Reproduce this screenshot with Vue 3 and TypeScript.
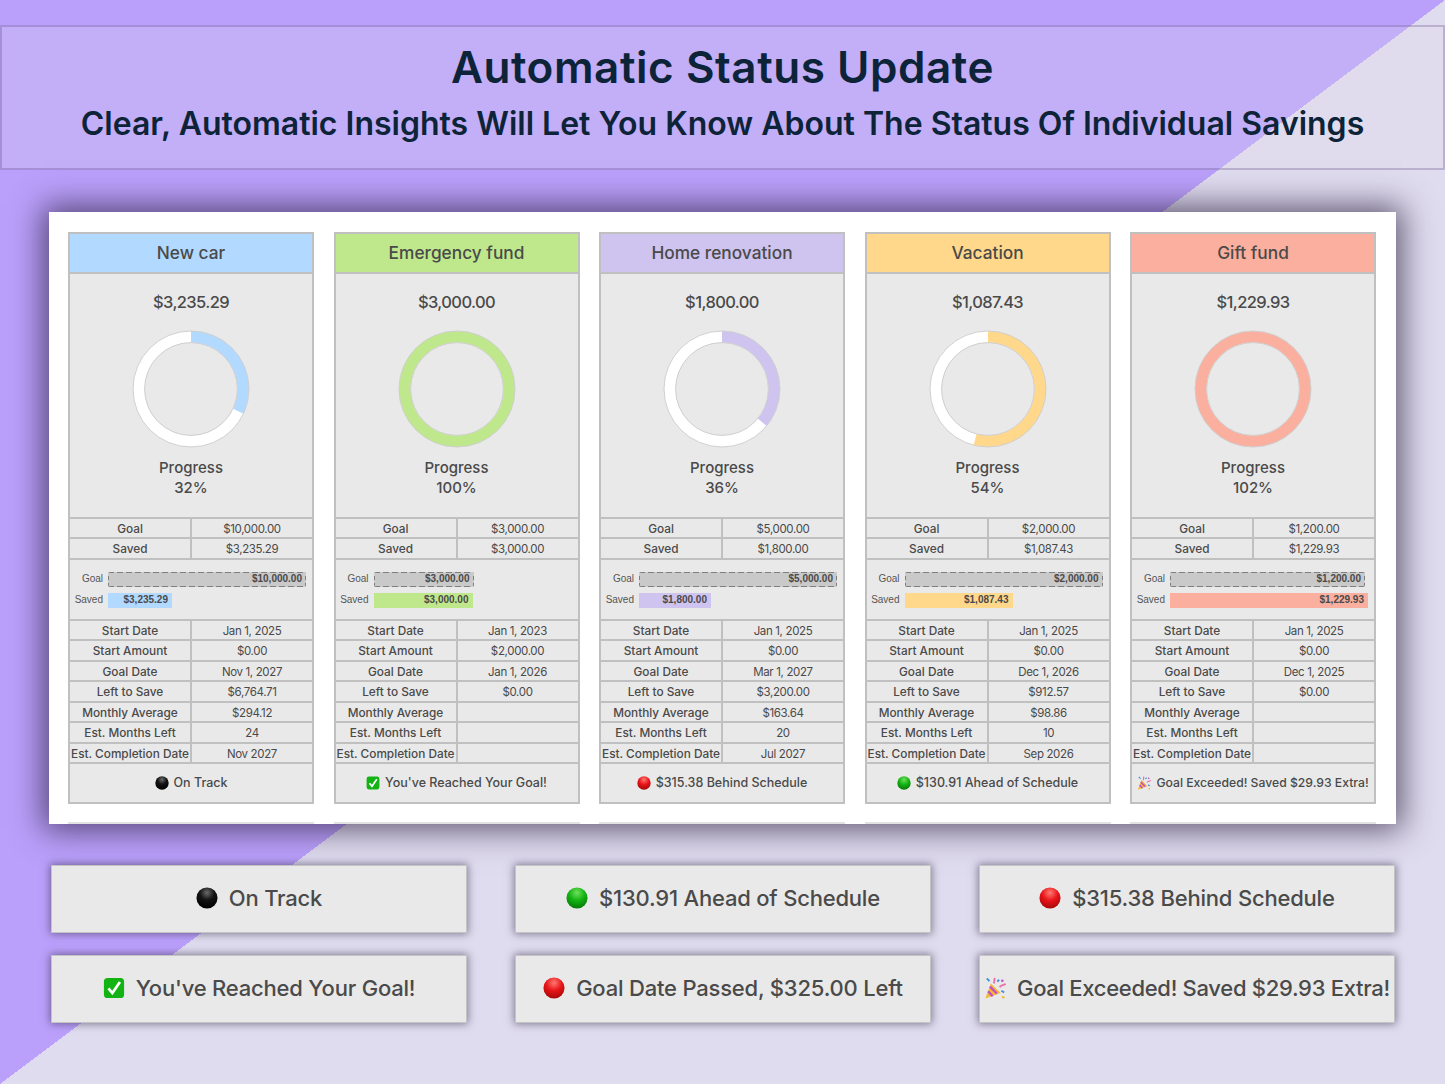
<script setup lang="ts">
type Status = 'black' | 'green' | 'red' | 'check' | 'party'
interface Row { label: string; value: string }
interface Goal {
  name: string; color: string; amount: string; pct: number; goal: string; saved: string
  goalW: number; savedW: number; rows: string[]; status: Status; statusText: string
}
const labels = ['Start Date', 'Start Amount', 'Goal Date', 'Left to Save', 'Monthly Average', 'Est. Months Left', 'Est. Completion Date']
const goals: Goal[] = [
  { name: 'New car', color: '#b2d9ff', amount: '$3,235.29', pct: 32, goal: '$10,000.00', saved: '$3,235.29', goalW: 198, savedW: 64,
    rows: ['Jan 1, 2025', '$0.00', 'Nov 1, 2027', '$6,764.71', '$294.12', '24', 'Nov 2027'], status: 'black', statusText: 'On Track' },
  { name: 'Emergency fund', color: '#bfe88c', amount: '$3,000.00', pct: 100, goal: '$3,000.00', saved: '$3,000.00', goalW: 100, savedW: 99,
    rows: ['Jan 1, 2023', '$2,000.00', 'Jan 1, 2026', '$0.00', '', '', ''], status: 'check', statusText: "You've Reached Your Goal!" },
  { name: 'Home renovation', color: '#cfc3ef', amount: '$1,800.00', pct: 36, goal: '$5,000.00', saved: '$1,800.00', goalW: 198, savedW: 72,
    rows: ['Jan 1, 2025', '$0.00', 'Mar 1, 2027', '$3,200.00', '$163.64', '20', 'Jul 2027'], status: 'red', statusText: '$315.38 Behind Schedule' },
  { name: 'Vacation', color: '#ffd88c', amount: '$1,087.43', pct: 54, goal: '$2,000.00', saved: '$1,087.43', goalW: 198, savedW: 108,
    rows: ['Jan 1, 2025', '$0.00', 'Dec 1, 2026', '$912.57', '$98.86', '10', 'Sep 2026'], status: 'green', statusText: '$130.91 Ahead of Schedule' },
  { name: 'Gift fund', color: '#fbaf9e', amount: '$1,229.93', pct: 102, goal: '$1,200.00', saved: '$1,229.93', goalW: 195, savedW: 198,
    rows: ['Jan 1, 2025', '$0.00', 'Dec 1, 2025', '$0.00', '', '', ''], status: 'party', statusText: 'Goal Exceeded! Saved $29.93 Extra!' },
]
const examples: { status: Status; text: string }[] = [
  { status: 'black', text: 'On Track' },
  { status: 'green', text: '$130.91 Ahead of Schedule' },
  { status: 'red', text: '$315.38 Behind Schedule' },
  { status: 'check', text: "You've Reached Your Goal!" },
  { status: 'red', text: 'Goal Date Passed, $325.00 Left' },
  { status: 'party', text: 'Goal Exceeded! Saved $29.93 Extra!' },
]
function rowsOf(g: Goal): Row[] {
  return labels.map((label, i) => ({ label, value: g.rows[i] }))
}
function ballFill(s: Status): string {
  return s === 'black' ? 'url(#ballBlack)' : s === 'green' ? 'url(#ballGreen)' : 'url(#ballRed)'
}
</script>

<template>
  <div class="page">
    <svg class="defs" width="0" height="0" aria-hidden="true">
      <defs>
        <radialGradient id="ballBlack" cx="50%" cy="25%" r="75%">
          <stop offset="0" stop-color="#6a6a6a" /><stop offset="0.45" stop-color="#141414" /><stop offset="1" stop-color="#000" />
        </radialGradient>
        <radialGradient id="ballGreen" cx="50%" cy="25%" r="75%">
          <stop offset="0" stop-color="#6fe05a" /><stop offset="0.5" stop-color="#14b314" /><stop offset="1" stop-color="#067a06" />
        </radialGradient>
        <radialGradient id="ballRed" cx="50%" cy="25%" r="75%">
          <stop offset="0" stop-color="#ff7a70" /><stop offset="0.5" stop-color="#e8141a" /><stop offset="1" stop-color="#a80808" />
        </radialGradient>
      </defs>
    </svg>

    <header class="banner">
      <h1>Automatic Status Update</h1>
      <h2>Clear, Automatic Insights Will Let You Know About The Status Of Individual Savings</h2>
    </header>

    <section class="panel">
      <div v-for="g in goals" :key="g.name" class="col">
        <article class="card">
          <div class="head" :style="{ background: g.color }">{{ g.name }}</div>
          <div class="body">
            <div class="amount">{{ g.amount }}</div>
            <svg class="donut" viewBox="0 0 118 118" width="118" height="118">
              <circle cx="59" cy="59" r="52.2" fill="none" stroke="#fff" stroke-width="11.6" />
              <circle cx="59" cy="59" r="52.2" fill="none" :stroke="g.color" stroke-width="11.6" pathLength="100"
                :stroke-dasharray="`${Math.min(g.pct, 100)} 100`" transform="rotate(-90 59 59)" />
              <circle cx="59" cy="59" r="58" fill="none" stroke="#cfcfcf" stroke-width="1" />
              <circle cx="59" cy="59" r="46.4" fill="none" stroke="#cfcfcf" stroke-width="1" />
            </svg>
            <div class="prog">Progress</div>
            <div class="prog">{{ g.pct }}%</div>
          </div>
          <div class="row"><span class="k">Goal</span><span class="v">{{ g.goal }}</span></div>
          <div class="row"><span class="k">Saved</span><span class="v">{{ g.saved }}</span></div>
          <div class="chart">
            <div class="bar-line">
              <span class="bar-label">Goal</span>
              <span class="bar goal" :style="{ width: g.goalW + 'px' }">{{ g.goal }}</span>
            </div>
            <div class="bar-line">
              <span class="bar-label">Saved</span>
              <span class="bar saved" :style="{ width: g.savedW + 'px', background: g.color }">{{ g.saved }}</span>
            </div>
          </div>
          <div v-for="r in rowsOf(g)" :key="r.label" class="row">
            <span class="k">{{ r.label }}</span><span class="v">{{ r.value }}</span>
          </div>
          <div class="status" :class="{ tight: g.status === 'party' }">
            <svg class="ico-sm" viewBox="0 0 24 24" width="14" height="14">
              <circle v-if="g.status === 'black' || g.status === 'green' || g.status === 'red'" cx="12" cy="12" r="11.5" :fill="ballFill(g.status)" />
              <g v-else-if="g.status === 'check'">
                <rect x="1" y="1" width="22" height="22" rx="4" fill="#12b312" />
                <path d="M6 12.5l4.2 5L18.5 5.5" fill="none" stroke="#fff" stroke-width="3" />
              </g>
              <g v-else>
                <path d="M1.5 23.5L7.5 7l10.5 10.5z" fill="#f5b82e" />
                <path d="M4.5 15.5l5 5.5M6.5 10.5l7.5 7.5" stroke="#c24fc9" stroke-width="2.6" />
                <path d="M10.5 7c1.5-2 0-3.5 1.5-6M17 11c2-2.5 3.5-1.5 6.5-3.5" fill="none" stroke="#ee6fa8" stroke-width="2" />
                <path d="M3 1.5l3 3M14.5 5l2-2M19 15l3 2" stroke="#3f8fe0" stroke-width="2" />
                <circle cx="21" cy="22" r="1.4" fill="#f5b82e" /><circle cx="20" cy="4" r="1.4" fill="#c24fc9" />
              </g>
            </svg>
            <span>{{ g.statusText }}</span>
          </div>
        </article>
        <div class="cut"></div>
      </div>
    </section>

    <section class="examples">
      <div v-for="(e, i) in examples" :key="i" class="example" :class="{ tight: e.status === 'party' }">
        <svg class="ico-lg" viewBox="0 0 24 24" width="22" height="22">
          <circle v-if="e.status === 'black' || e.status === 'green' || e.status === 'red'" cx="12" cy="12" r="11.5" :fill="ballFill(e.status)" />
          <g v-else-if="e.status === 'check'">
            <rect x="1" y="1" width="22" height="22" rx="4" fill="#12b312" />
            <path d="M6 12.5l4.2 5L18.5 5.5" fill="none" stroke="#fff" stroke-width="3" />
          </g>
          <g v-else>
            <path d="M1.5 23.5L7.5 7l10.5 10.5z" fill="#f5b82e" />
            <path d="M4.5 15.5l5 5.5M6.5 10.5l7.5 7.5" stroke="#c24fc9" stroke-width="2.6" />
            <path d="M10.5 7c1.5-2 0-3.5 1.5-6M17 11c2-2.5 3.5-1.5 6.5-3.5" fill="none" stroke="#ee6fa8" stroke-width="2" />
            <path d="M3 1.5l3 3M14.5 5l2-2M19 15l3 2" stroke="#3f8fe0" stroke-width="2" />
            <circle cx="21" cy="22" r="1.4" fill="#f5b82e" /><circle cx="20" cy="4" r="1.4" fill="#c24fc9" />
          </g>
        </svg>
        <span>{{ e.text }}</span>
      </div>
    </section>
  </div>
</template>

<style scoped>
.page {
  width: 1445px;
  height: 1084px;
  overflow: hidden;
  background: linear-gradient(to bottom right, #bba0fb 50%, #e0dcef 50%);
  font-family: Inter, "Noto Sans", sans-serif;
  color: #4a4a4a;
  padding-top: 25px;
  box-sizing: border-box;
}
.defs { position: absolute; }
.banner {
  height: 145px;
  box-sizing: border-box;
  border: 2px solid rgba(90, 70, 130, 0.28);
  background: rgba(224, 222, 236, 0.22);
  text-align: center;
  color: #0d2438;
}
h1 {
  margin: 0;
  padding-top: 16px;
  font-size: 44px;
  line-height: 48px;
  font-weight: 600;
  letter-spacing: 0.55px;
}
h2 {
  margin: 0;
  padding-top: 13px;
  font-size: 32px;
  line-height: 40px;
  font-weight: 600;
  white-space: nowrap;
}
.panel {
  margin: 42px 49px 0;
  height: 612px;
  box-sizing: border-box;
  padding: 20px 20px 0 19px;
  background: #fff;
  box-shadow: 0 0 30px 6px rgba(40, 30, 60, 0.7);
  display: grid;
  grid-template-columns: repeat(5, 246px);
  column-gap: 19.5px;
}
.col { display: flex; flex-direction: column; gap: 18px; }
.cut { height: 2px; background: #e2e2e2; }
.card {
  height: 572px;
  box-sizing: border-box;
  border: 2px solid #c0c0c0;
  background: #e9e9e9;
  display: flex;
  flex-direction: column;
}
.head {
  height: 40px;
  flex: none;
  box-sizing: border-box;
  border-bottom: 2px solid #c0c0c0;
  padding-bottom: 2px;
  display: flex;
  align-items: center;
  justify-content: center;
  font-size: 17.3px;
  font-weight: 500;
}
.body {
  height: 243px;
  flex: none;
  box-sizing: border-box;
  padding-top: 18px;
  display: flex;
  flex-direction: column;
  align-items: center;
}
.amount { font-size: 16.5px; line-height: 20px; font-weight: 500; letter-spacing: -0.6px; margin-bottom: 18px; }
.donut { display: block; margin-bottom: 9.5px; }
.prog { font-size: 15px; line-height: 20.5px; font-weight: 500; }
.row {
  height: 20.45px;
  flex: none;
  box-sizing: border-box;
  border-top: 2px solid #c0c0c0;
  display: grid;
  grid-template-columns: 120px 1fr;
  font-size: 11.8px;
  line-height: 19px;
  text-align: center;
  white-space: nowrap;
}
.k { font-weight: 500; padding-top: 1px; }
.v { border-left: 2px solid #c0c0c0; font-weight: 400; font-size: 11.5px; letter-spacing: -0.35px; padding-top: 1px; }
.chart {
  height: 61px;
  flex: none;
  box-sizing: border-box;
  border-top: 2px solid #c0c0c0;
  padding-top: 12px;
  display: flex;
  flex-direction: column;
  gap: 6px;
  font-family: "Liberation Sans", Arial, sans-serif;
}
.bar-line { display: flex; align-items: center; height: 15px; }
.bar-label { width: 33px; margin-right: 5px; text-align: right; font-size: 10px; line-height: 13px; padding-bottom: 2px; color: #555; }
.bar {
  height: 15px;
  box-sizing: border-box;
  font-size: 10px;
  font-weight: 700;
  line-height: 14px;
  text-align: right;
  padding-right: 4px;
  white-space: nowrap;
}
.bar.goal {
  background:
    repeating-linear-gradient(90deg, #7f7f7f 0 6px, transparent 6px 9px) left top / 100% 1px no-repeat,
    repeating-linear-gradient(90deg, #7f7f7f 0 6px, transparent 6px 9px) left bottom / 100% 1px no-repeat,
    repeating-linear-gradient(0deg, #7f7f7f 0 4px, transparent 4px 7px) left top / 1px 100% no-repeat,
    repeating-linear-gradient(0deg, #7f7f7f 0 4px, transparent 4px 7px) right top / 1px 100% no-repeat,
    #c9c9c9;
  border-radius: 2px;
  line-height: 14px;
}
.status {
  flex: 1;
  border-top: 2px solid #c0c0c0;
  display: flex;
  align-items: center;
  justify-content: center;
  gap: 5px;
  font-size: 12.5px;
  font-weight: 500;
  white-space: nowrap;
}
.status.tight { font-size: 12.2px; }
.ico-sm, .ico-lg { flex: none; }
.examples {
  margin: 41px 0 0 50.7px;
  display: grid;
  grid-template-columns: repeat(3, 416.6px);
  grid-auto-rows: 68px;
  column-gap: 47.4px;
  row-gap: 22px;
}
.example {
  box-sizing: border-box;
  background: #e9e9e9;
  border: 1px solid #c4c4c4;
  box-shadow: 0 0 8px 1px rgba(50, 40, 70, 0.55);
  padding-bottom: 2px;
  display: flex;
  align-items: center;
  justify-content: center;
  gap: 11px;
  font-size: 22px;
  font-weight: 500;
  letter-spacing: -0.2px;
  white-space: nowrap;
}
.example.tight { letter-spacing: -0.3px; }
</style>
